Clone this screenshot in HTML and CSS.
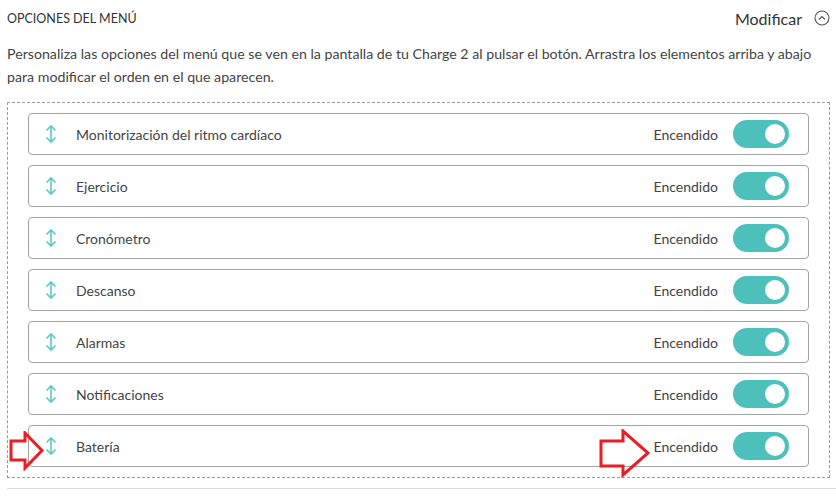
FILE: index.html
```html
<!DOCTYPE html>
<html lang="es">
<head>
<meta charset="utf-8">
<title>Opciones del menú</title>
<link rel="stylesheet" href="styles.css">
</head>
<body>
<div class="page">
  <div class="header">
    <div class="title">OPCIONES DEL MENÚ</div>
    <div class="modify">
      <span>Modificar</span>
      <svg class="chev" width="16" height="16" viewBox="0 0 16 16"><circle cx="8" cy="8" r="7" fill="none" stroke="#555" stroke-width="1.1"/><path d="M5 9.5 L8 6.5 L11 9.5" fill="none" stroke="#555" stroke-width="1.2"/></svg>
    </div>
  </div>
  <p class="desc">Personaliza las opciones del menú que se ven en la pantalla de tu Charge 2 al pulsar el botón. Arrastra los elementos arriba y abajo para modificar el orden en el que aparecen.</p>
  <div class="list">
    <div class="row"><span class="drag"><svg width="14" height="22" viewBox="0 0 14 22"><path d="M7 3 V19 M2.5 7.5 L7 3 L11.5 7.5 M2.5 14.5 L7 19 L11.5 14.5" fill="none" stroke="#5cc8c3" stroke-width="1.6"/></svg></span><span class="name">Monitorización del ritmo cardíaco</span><span class="state">Encendido</span><span class="toggle"><span class="knob"></span></span></div>
    <div class="row"><span class="drag"><svg width="14" height="22" viewBox="0 0 14 22"><path d="M7 3 V19 M2.5 7.5 L7 3 L11.5 7.5 M2.5 14.5 L7 19 L11.5 14.5" fill="none" stroke="#5cc8c3" stroke-width="1.6"/></svg></span><span class="name">Ejercicio</span><span class="state">Encendido</span><span class="toggle"><span class="knob"></span></span></div>
    <div class="row"><span class="drag"><svg width="14" height="22" viewBox="0 0 14 22"><path d="M7 3 V19 M2.5 7.5 L7 3 L11.5 7.5 M2.5 14.5 L7 19 L11.5 14.5" fill="none" stroke="#5cc8c3" stroke-width="1.6"/></svg></span><span class="name">Cronómetro</span><span class="state">Encendido</span><span class="toggle"><span class="knob"></span></span></div>
    <div class="row"><span class="drag"><svg width="14" height="22" viewBox="0 0 14 22"><path d="M7 3 V19 M2.5 7.5 L7 3 L11.5 7.5 M2.5 14.5 L7 19 L11.5 14.5" fill="none" stroke="#5cc8c3" stroke-width="1.6"/></svg></span><span class="name">Descanso</span><span class="state">Encendido</span><span class="toggle"><span class="knob"></span></span></div>
    <div class="row"><span class="drag"><svg width="14" height="22" viewBox="0 0 14 22"><path d="M7 3 V19 M2.5 7.5 L7 3 L11.5 7.5 M2.5 14.5 L7 19 L11.5 14.5" fill="none" stroke="#5cc8c3" stroke-width="1.6"/></svg></span><span class="name">Alarmas</span><span class="state">Encendido</span><span class="toggle"><span class="knob"></span></span></div>
    <div class="row"><span class="drag"><svg width="14" height="22" viewBox="0 0 14 22"><path d="M7 3 V19 M2.5 7.5 L7 3 L11.5 7.5 M2.5 14.5 L7 19 L11.5 14.5" fill="none" stroke="#5cc8c3" stroke-width="1.6"/></svg></span><span class="name">Notificaciones</span><span class="state">Encendido</span><span class="toggle"><span class="knob"></span></span></div>
    <div class="row"><span class="drag"><svg width="14" height="22" viewBox="0 0 14 22"><path d="M7 3 V19 M2.5 7.5 L7 3 L11.5 7.5 M2.5 14.5 L7 19 L11.5 14.5" fill="none" stroke="#5cc8c3" stroke-width="1.6"/></svg></span><span class="name">Batería</span><span class="state">Encendido</span><span class="toggle"><span class="knob"></span></span></div>
  </div>
  <div class="rule"></div>
  <svg class="mark mark-left" width="36" height="40" viewBox="0 0 36 40"><path d="M2 10 H16 V2 L33 19.5 L16 37 V29 H2 Z" fill="none" stroke="#ea1c24" stroke-width="3" stroke-linejoin="miter"/></svg>
  <svg class="mark mark-right" width="52" height="50" viewBox="0 0 52 50"><path d="M2 12 H24 V2 L49 24 L24 46 V37 H2 Z" fill="none" stroke="#ea1c24" stroke-width="3" stroke-linejoin="miter"/></svg>
</div>
</body>
</html>
```
FILE: styles.css
```css
html, body {
  margin: 0;
  padding: 0;
  background: #fff;
}
body {
  font-family: "Lato", "Open Sans", sans-serif;
  color: #444;
}
.page {
  position: relative;
  width: 836px;
  height: 496px;
  overflow: hidden;
  padding: 0 0 0 7px;
  box-sizing: border-box;
}
.header {
  display: flex;
  align-items: center;
  justify-content: space-between;
  height: 34px;
  padding-top: 1px;
}
.title {
  font-size: 12.5px;
  color: #333;
}
.modify {
  display: flex;
  align-items: center;
  gap: 12px;
  font-size: 16px;
  color: #333;
  padding-right: 6px;
}
.chev {
  display: block;
}
.desc {
  margin: 7px 0 0 0;
  font-size: 14.2px;
  line-height: 23px;
  color: #444;
  padding-right: 8px;
}
.list {
  margin-top: 14px;
  width: 823px;
  box-sizing: border-box;
  border: 1px dashed #9a9a9a;
  padding: 10px 20px;
  display: flex;
  flex-direction: column;
  gap: 10px;
}
.row {
  height: 42px;
  box-sizing: border-box;
  border: 1px solid #a3a3a3;
  border-radius: 4px;
  display: flex;
  align-items: center;
  padding: 0 19px 0 15px;
}
.drag {
  display: flex;
  width: 14px;
  height: 22px;
}
.name {
  margin-left: 18px;
  font-size: 14px;
  color: #444;
  flex: 1;
}
.state {
  font-size: 14px;
  color: #444;
  margin-right: 15px;
}
.toggle {
  width: 56px;
  height: 28px;
  border-radius: 14px;
  background: #4ec0bc;
  position: relative;
}
.knob {
  position: absolute;
  right: 4px;
  top: 4px;
  width: 20px;
  height: 20px;
  border-radius: 50%;
  background: #fff;
}
.rule {
  margin-top: 10px;
  height: 1px;
  background: #dcdcdc;
}
.mark {
  position: absolute;
}
.mark-left {
  left: 9px;
  top: 431px;
}
.mark-right {
  left: 599px;
  top: 429px;
}
```
